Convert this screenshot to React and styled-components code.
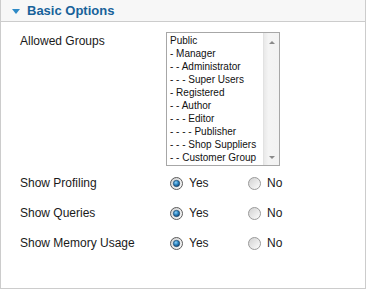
import React from "react";
import styled, { createGlobalStyle } from "styled-components";

const Global = createGlobalStyle`
  html, body { margin: 0; padding: 0; background: #fff; }
  body { font-family: "Liberation Sans", Arial, sans-serif; }
`;

const Panel = styled.div`
  box-sizing: border-box;
  width: 366px;
  height: 289px;
  border: 1px solid #cccccc;
  border-top: none;
  background: #fff;
`;

const Header = styled.div`
  box-sizing: border-box;
  height: 22px;
  display: flex;
  align-items: center;
  gap: 7px;
  padding-left: 11px;
  background: #f7f7f7;
  border-bottom: 1px solid #cccccc;
  color: #17629a;
  font-weight: bold;
  font-size: 13px;
  line-height: 1;
`;

const Triangle = styled.span`
  width: 0;
  height: 0;
  border-left: 4px solid transparent;
  border-right: 4px solid transparent;
  border-top: 5px solid #2e8ac6;
  margin-top: 1px;
`;

const Body = styled.div`
  padding: 10px 0 0 19px;
  display: grid;
  grid-template-columns: 146px 1fr;
  align-items: center;
`;

const Label = styled.div`
  font-size: 12px;
  color: #1a1a1a;
  align-self: ${(p) => (p.$top ? "start" : "center")};
  padding-top: ${(p) => (p.$top ? "2px" : "0")};
  height: ${(p) => (p.$top ? "auto" : "30px")};
  line-height: ${(p) => (p.$top ? "14px" : "30px")};
  margin-top: ${(p) => (p.$first ? "2px" : "0")};
`;

const ListBox = styled.div`
  box-sizing: border-box;
  width: 114px;
  height: 134px;
  border: 1px solid #a7a7a7;
  display: flex;
  margin-bottom: 2px;
`;

const Options = styled.ul`
  flex: 1;
  list-style: none;
  margin: 0;
  padding: 1px 0 0 3px;
  font-size: 10px;
  line-height: 13px;
  color: #111;
  white-space: nowrap;
  overflow: hidden;
`;

const ScrollBar = styled.div`
  width: 16px;
  display: flex;
  flex-direction: column;
  justify-content: space-between;
  align-items: center;
  background: linear-gradient(to right, #e9e9e9, #f4f4f4 30%, #f2f2f2);
  border-left: 1px solid #e2e2e2;
  padding: 8px 0 6px;
  box-sizing: border-box;
`;

const Arrow = styled.span`
  width: 0;
  height: 0;
  border-left: 3px solid transparent;
  border-right: 3px solid transparent;
  ${(p) =>
    p.$down
      ? "border-top: 3px solid #8a8a8a;"
      : "border-bottom: 3px solid #8a8a8a;"}
`;

const RadioRow = styled.div`
  height: 30px;
  display: flex;
  align-items: center;
  font-size: 12px;
  color: #1a1a1a;
`;

const RadioOption = styled.label`
  display: flex;
  align-items: center;
  gap: 6px;
  width: 78px;
  padding-left: 4px;
  box-sizing: border-box;
`;

const Radio = ({ checked }) => (
  <svg width="13" height="13" viewBox="0 0 13 13">
    <defs>
      <linearGradient id={checked ? "rgc" : "rgu"} x1="0" y1="0" x2="1" y2="1">
        <stop offset="0" stopColor="#cfcfcf" />
        <stop offset="1" stopColor="#ffffff" />
      </linearGradient>
      <radialGradient id="dot" cx="0.4" cy="0.35" r="0.7">
        <stop offset="0" stopColor="#8fd0f5" />
        <stop offset="0.5" stopColor="#2b86c4" />
        <stop offset="1" stopColor="#0f3e6a" />
      </radialGradient>
    </defs>
    <circle
      cx="6.5"
      cy="6.5"
      r="6"
      fill={`url(#${checked ? "rgc" : "rgu"})`}
      stroke={checked ? "#5c5c5c" : "#9a9a9a"}
      strokeWidth="1"
    />
    {checked && (
      <circle cx="6.5" cy="6.5" r="3.2" fill="url(#dot)" stroke="#1b3f62" strokeWidth="0.6" />
    )}
  </svg>
);

const groups = [
  "Public",
  "- Manager",
  "- - Administrator",
  "- - - Super Users",
  "- Registered",
  "- - Author",
  "- - - Editor",
  "- - - - Publisher",
  "- - - Shop Suppliers",
  "- - Customer Group",
];

const settings = ["Show Profiling", "Show Queries", "Show Memory Usage"];

export default function App() {
  return (
    <>
      <Global />
      <Panel>
        <Header>
          <Triangle />
          Basic Options
        </Header>
        <Body>
          <Label $top>Allowed Groups</Label>
          <ListBox>
            <Options>
              {groups.map((g) => (
                <li key={g}>{g}</li>
              ))}
            </Options>
            <ScrollBar>
              <Arrow />
              <Arrow $down />
            </ScrollBar>
          </ListBox>
          {settings.map((s) => (
            <React.Fragment key={s}>
              <Label>{s}</Label>
              <RadioRow>
                <RadioOption>
                  <Radio checked />
                  Yes
                </RadioOption>
                <RadioOption>
                  <Radio />
                  No
                </RadioOption>
              </RadioRow>
            </React.Fragment>
          ))}
        </Body>
      </Panel>
    </>
  );
}
